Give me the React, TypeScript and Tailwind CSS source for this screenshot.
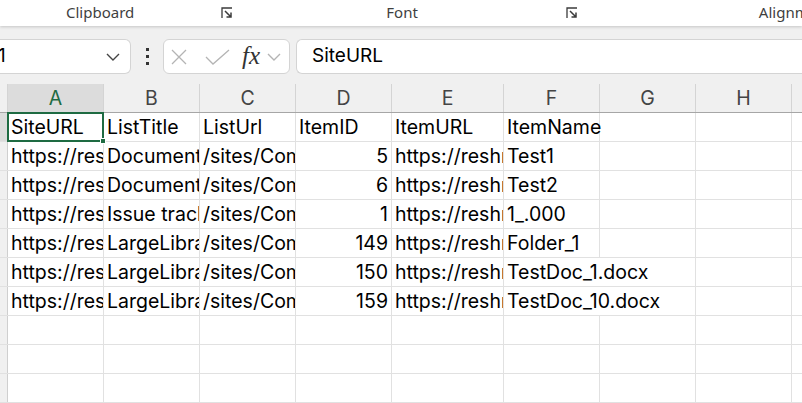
const cols = [
  { key: "A", w: "w-[96px]" },
  { key: "B", w: "w-[96px]" },
  { key: "C", w: "w-[96px]" },
  { key: "D", w: "w-[96px]" },
  { key: "E", w: "w-[112px]" },
  { key: "F", w: "w-[96px]" },
  { key: "G", w: "w-[96px]" },
  { key: "H", w: "w-[96px]" },
];

const rows = [
  ["SiteURL", "ListTitle", "ListUrl", "ItemID", "ItemURL", "ItemName"],
  ["https://reshmeeauckloo.sharepoint.com", "Documents", "/sites/Company", "5", "https://reshmeeauckloo", "Test1"],
  ["https://reshmeeauckloo.sharepoint.com", "Documents", "/sites/Company", "6", "https://reshmeeauckloo", "Test2"],
  ["https://reshmeeauckloo.sharepoint.com", "Issue tracker", "/sites/Company", "1", "https://reshmeeauckloo", "1_.000"],
  ["https://reshmeeauckloo.sharepoint.com", "LargeLibrary", "/sites/Company", "149", "https://reshmeeauckloo", "Folder_1"],
  ["https://reshmeeauckloo.sharepoint.com", "LargeLibrary", "/sites/Company", "150", "https://reshmeeauckloo", "TestDoc_1.docx"],
  ["https://reshmeeauckloo.sharepoint.com", "LargeLibrary", "/sites/Company", "159", "https://reshmeeauckloo", "TestDoc_10.docx"],
  [],
  [],
  [],
];

const Launcher = ({ className }: { className: string }) => (
  <svg className={className} width="12" height="12" viewBox="0 0 12 12" fill="none">
    <path d="M1 11V1h10" stroke="#3b3b3b" strokeWidth="1.3" />
    <path d="M4 4l6 6M10 5.5V10H5.5" stroke="#3b3b3b" strokeWidth="1.5" />
  </svg>
);

const Chevron = ({ color }: { color: string }) => (
  <svg width="14" height="8" viewBox="0 0 14 8" fill="none">
    <path d="M1 1l6 6 6-6" stroke={color} strokeWidth="1.4" />
  </svg>
);

const Cell = ({ w, text, num, spill }: { w: string; text?: string; num?: boolean; spill?: boolean }) => (
  <div
    className={`${w} shrink-0 h-full border-r border-[#e1e1e1] whitespace-nowrap flex items-center pt-[2px] ${
      spill ? "overflow-visible relative z-10" : "overflow-hidden"
    } ${num ? "justify-end pr-[3px]" : "pl-[3px]"}`}
  >
    {text}
  </div>
);

export default function App() {
  return (
    <div
      className="w-[802px] h-[403px] overflow-hidden bg-[#f0f0f0] text-black"
      style={{ fontFamily: "Inter, 'Liberation Sans', sans-serif" }}
    >
      {/* ribbon group labels */}
      <div
        className="h-[26px] bg-white flex items-start shadow-[0_1px_3px_rgba(0,0,0,0.18)] relative text-[15px] text-[#3f3f3f]"
        style={{ fontFamily: "'Noto Sans', 'Open Sans', sans-serif" }}
      >
        <div className="w-[239px] h-[24px] flex items-center pl-[66px]">
          <span>Clipboard</span>
          <Launcher className="ml-[87px] mt-[1px]" />
        </div>
        <div className="w-px h-[17px] bg-[#d6d6d6]" />
        <div className="w-[349px] h-[24px] flex items-center pl-[153px]">
          <span>Font</span>
          <Launcher className="ml-[148px] mt-[1px]" />
        </div>
        <div className="w-px h-[17px] bg-[#d6d6d6]" />
        <div className="flex-1 h-[24px] flex items-center pl-[181px] whitespace-nowrap">
          <span>Alignment</span>
        </div>
      </div>

      {/* formula bar */}
      <div className="h-[58px] pt-[13px] flex items-start">
        <div className="w-[131px] h-[35px] bg-white border border-l-0 border-[#d4d4d4] rounded-r-[6px] flex items-center justify-between pr-[10px]">
          <span className="text-[19px] -ml-[2px]">1</span>
          <Chevron color="#444" />
        </div>
        <div className="w-[32px] h-[35px] flex flex-col items-center justify-center gap-[4px]">
          <div className="w-[3px] h-[3px] bg-[#333]" />
          <div className="w-[3px] h-[3px] bg-[#333]" />
          <div className="w-[3px] h-[3px] bg-[#333]" />
        </div>
        <div className="w-[127px] h-[35px] bg-white border border-[#d4d4d4] rounded-[6px] flex items-center pl-[7px]">
          <svg width="16" height="16" viewBox="0 0 16 16" fill="none">
            <path d="M1 1l14 14M15 1L1 15" stroke="#b4b4b4" strokeWidth="1.3" />
          </svg>
          <svg className="ml-[18px]" width="25" height="16" viewBox="0 0 25 16" fill="none">
            <path d="M1 8l7 7L24 1" stroke="#b4b4b4" strokeWidth="1.3" />
          </svg>
          <span
            className="ml-[12px] text-[25px] italic leading-none text-[#333] -mt-[3px]"
            style={{ fontFamily: "'Liberation Serif', 'Times New Roman', serif" }}
          >
            fx
          </span>
          <span className="ml-[7px]">
            <Chevron color="#b4b4b4" />
          </span>
        </div>
        <div className="flex-1 ml-[6px] h-[35px] bg-white border border-r-0 border-[#d4d4d4] rounded-l-[6px] flex items-center pl-[15px] text-[19px]">
          SiteURL
        </div>
      </div>

      {/* grid */}
      <div className="bg-white text-[19.5px]">
        <div className="h-[29px] flex bg-[#f0f0f0] border-b border-[#a6a6a6]">
          <div className="w-[8px] shrink-0 border-r border-[#d4d4d4]" />
          {cols.map((c) => (
            <div
              key={c.key}
              className={`${c.w} shrink-0 border-r border-[#d4d4d4] flex items-center justify-center pt-[2px] ${
                c.key === "A" ? "bg-[#dcdcdc] text-[#1e6b42]" : "text-[#444]"
              }`}
            >
              {c.key}
            </div>
          ))}
          <div className="flex-1" />
        </div>
        {rows.map((r, i) => {
          const wide = (r[5] ?? "").length > 9;
          return (
            <div key={i} className="h-[29px] flex border-b border-[#e1e1e1]">
              <div
                className={`w-[8px] shrink-0 border-r border-[#cfcfcf] ${i === 0 ? "bg-[#dcdcdc]" : "bg-[#f0f0f0]"}`}
              />
              <div className="w-[96px] shrink-0 h-full relative">
                <div className="h-full border-r border-[#e1e1e1] overflow-hidden whitespace-nowrap flex items-center pt-[2px] pl-[3px]">
                  {r[0]}
                </div>
                {i === 0 && (
                  <div className="absolute -left-[1px] -top-[1px] w-[97px] h-[30px] border-2 border-[#1e6b42] z-20">
                    <div className="absolute -right-[4px] -bottom-[4px] w-[6px] h-[6px] bg-[#1e6b42] border border-white" />
                  </div>
                )}
              </div>
              <Cell w="w-[96px]" text={r[1]} />
              <Cell w="w-[96px]" text={r[2]} />
              <Cell w="w-[96px]" text={r[3]} num={i > 0} />
              <Cell w="w-[112px]" text={r[4]} />
              {wide ? (
                <Cell w="w-[192px]" text={r[5]} />
              ) : (
                <>
                  <Cell w="w-[96px]" text={r[5]} spill />
                  <Cell w="w-[96px]" />
                </>
              )}
              <Cell w="w-[96px]" />
              <div className="flex-1" />
            </div>
          );
        })}
      </div>
    </div>
  );
}
